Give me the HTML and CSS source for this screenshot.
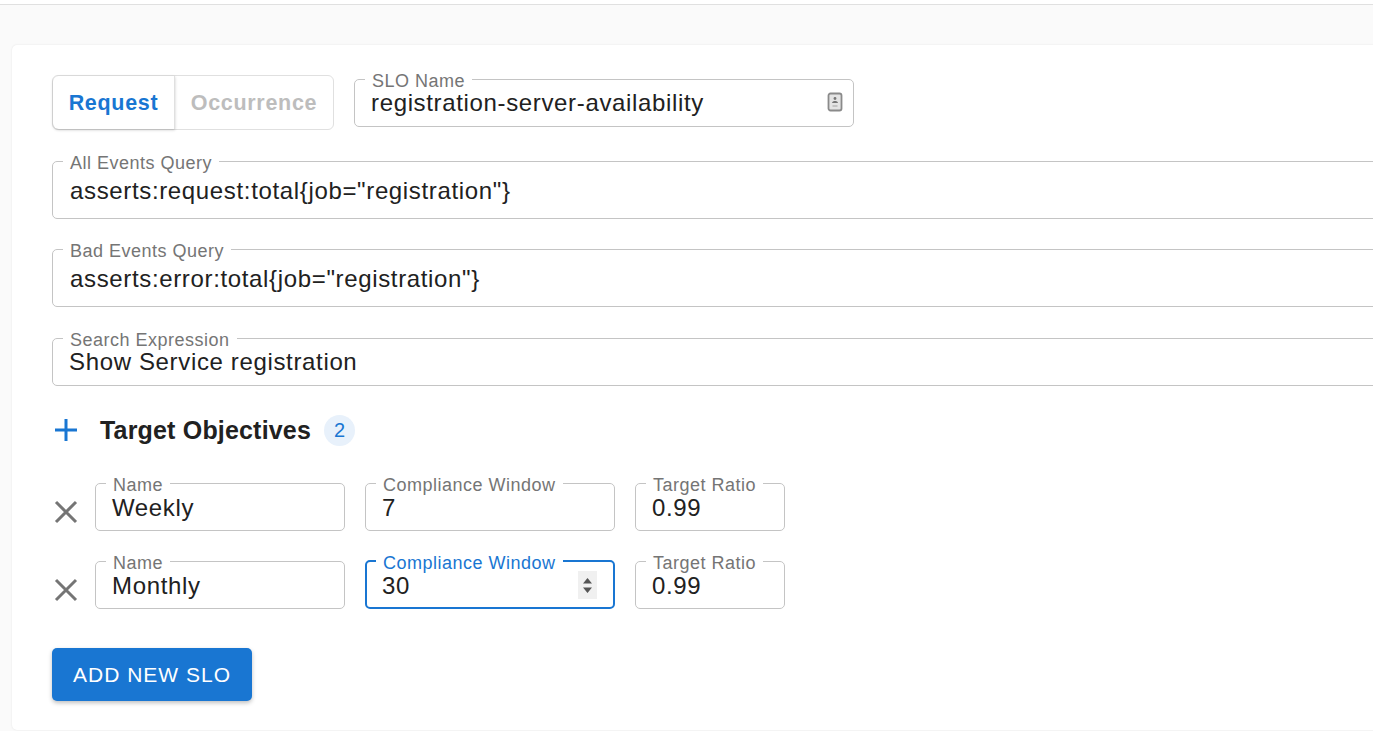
FILE: index.html
```html
<!DOCTYPE html>
<html>
<head>
    <title>Add SLO</title>
    <link rel="stylesheet" href="styles.css">
</head>
<body>
    <div id="topBar"></div>
    <div id="wrap">
        <div id="card">
            <div class="row">
                <div class="toggle">
                    <div class="toggleItem active">Request</div>
                    <div class="toggleItem">Occurrence</div>
                </div>
                <fieldset class="field sloName">
                    <legend>SLO Name</legend>
                    <div class="value">registration-server-availability</div>
                    <svg class="contactIcon" width="16" height="20" viewBox="0 0 16 20">
                        <rect x="1.5" y="1.5" width="13" height="17" rx="2" fill="#e4e4e4" stroke="#8a8a8a" stroke-width="1.8"/>
                        <circle cx="8" cy="6.5" r="1.4" fill="#777"/>
                        <path d="M5 11 C5.5 8.4 10.5 8.4 11 11 Z" fill="#777"/>
                        <path d="M5.5 14 H10.5" stroke="#b5b5b5" stroke-width="1.4"/>
                    </svg>
                </fieldset>
            </div>

            <fieldset class="field wide">
                <legend>All Events Query</legend>
                <div class="value tall">asserts:request:total{job="registration"}</div>
            </fieldset>

            <fieldset class="field wide">
                <legend>Bad Events Query</legend>
                <div class="value tall">asserts:error:total{job="registration"}</div>
            </fieldset>

            <fieldset class="field wide short">
                <legend>Search Expression</legend>
                <div class="value search">Show Service registration</div>
            </fieldset>

            <div class="targetHead">
                <svg class="plusIcon" width="24" height="24" viewBox="0 0 24 24">
                    <path d="M12 1 V23 M1 12 H23" stroke="#1976d2" stroke-width="3" fill="none"/>
                </svg>
                <h2>Target Objectives</h2>
                <span class="badge">2</span>
            </div>

            <div class="targetRow">
                <svg class="closeIcon" width="24" height="24" viewBox="0 0 24 24">
                    <path d="M2 2 L22 22 M22 2 L2 22" stroke="#757575" stroke-width="3" fill="none"/>
                </svg>
                <fieldset class="field nameField">
                    <legend>Name</legend>
                    <div class="value">Weekly</div>
                </fieldset>
                <fieldset class="field windowField">
                    <legend>Compliance Window</legend>
                    <div class="value">7</div>
                </fieldset>
                <fieldset class="field ratioField">
                    <legend>Target Ratio</legend>
                    <div class="value">0.99</div>
                </fieldset>
            </div>

            <div class="targetRow">
                <svg class="closeIcon" width="24" height="24" viewBox="0 0 24 24">
                    <path d="M2 2 L22 22 M22 2 L2 22" stroke="#757575" stroke-width="3" fill="none"/>
                </svg>
                <fieldset class="field nameField">
                    <legend>Name</legend>
                    <div class="value">Monthly</div>
                </fieldset>
                <fieldset class="field windowField focused">
                    <legend>Compliance Window</legend>
                    <div class="value">30</div>
                    <div class="spinner">
                        <svg width="19" height="28" viewBox="0 0 19 28">
                            <path d="M9.5 7 L14 12.5 H5 Z M9.5 22 L14 16.5 H5 Z" fill="#555"/>
                        </svg>
                    </div>
                </fieldset>
                <fieldset class="field ratioField">
                    <legend>Target Ratio</legend>
                    <div class="value">0.99</div>
                </fieldset>
            </div>

            <button class="addButton" type="button">ADD NEW SLO</button>
        </div>
    </div>
</body>
</html>
```

FILE: styles.css
```css
html, body {
    padding: 0;
    margin: 0;
    height: 100%;
    overflow: hidden;
    background: #fafafa;
    font-family: "Liberation Sans", Arial, Helvetica, sans-serif;
    color: #212121;
}
#topBar {
    height: 4px;
    background: #fff;
    border-bottom: 1px solid #e0e0e0;
}
#wrap {
    padding: 40px 0 0 12px;
}
#card {
    width: 1420px;
    height: 685px;
    box-sizing: border-box;
    padding: 22px 40px 0;
    background: #fff;
    border-radius: 5px;
    box-shadow: 0 0 2px rgba(0,0,0,0.1);
}
.row {
    display: flex;
    align-items: flex-start;
    gap: 20px;
    margin-bottom: 19px;
}
.toggle {
    display: flex;
    width: 282px;
    height: 55px;
    box-sizing: border-box;
    margin-top: 8px;
    border: 1px solid #e0e0e0;
    border-radius: 6px;
}
.toggleItem {
    display: flex;
    align-items: center;
    justify-content: center;
    flex: 1;
    padding-top: 2px;
    font-size: 21.5px;
    letter-spacing: 0.7px;
    font-weight: bold;
    color: #bdbdbd;
}
.toggleItem.active {
    flex: none;
    width: 122px;
    box-sizing: border-box;
    color: #1976d2;
    border-right: 1px solid #e0e0e0;
    border-radius: 6px 0 0 6px;
    box-shadow: 0 1px 3px rgba(0,0,0,0.22);
}
.field {
    position: relative;
    min-width: 0;
    margin: 0;
    padding: 0 17px;
    box-sizing: border-box;
    border: 1px solid #c4c4c4;
    border-radius: 5px;
}
.field legend {
    margin-left: -7px;
    padding: 4px 7px 0;
    font-size: 18px;
    letter-spacing: 0.5px;
    line-height: 20px;
    color: #757575;
}
.value {
    font-size: 24px;
    letter-spacing: 0.65px;
    line-height: 28px;
    height: 28px;
    margin-top: -2px;
    margin-bottom: 9px;
}
.value.tall {
    padding-top: 6px;
    margin-bottom: 13px;
}
.value.search {
    margin-left: -1px;
    margin-bottom: 9px;
}
.sloName {
    width: 500px;
}
.sloName .value {
    margin-left: -1px;
}
.contactIcon {
    position: absolute;
    right: 10px;
    top: 1px;
}
.wide {
    display: block;
    margin-bottom: 18px;
}
.short {
    margin-top: 19px;
}
.targetHead {
    display: flex;
    align-items: center;
    height: 52px;
    margin-bottom: 15px;
}
.plusIcon {
    margin: 0 22px 0 2px;
}
.targetHead h2 {
    margin: 0 13px 0 0;
    font-size: 25px;
    letter-spacing: 0.18px;
    font-weight: bold;
}
.badge {
    display: flex;
    align-items: center;
    justify-content: center;
    width: 31px;
    height: 31px;
    border-radius: 50%;
    background: #e8f1fb;
    color: #1976d2;
    font-size: 20px;
}
.targetRow {
    display: flex;
    align-items: flex-end;
    gap: 20px;
    margin-bottom: 18px;
}
.targetRow .value {
    margin-top: -1px;
    margin-left: -1px;
    margin-bottom: 8px;
}
.closeIcon {
    margin: 0 -3px 7px 2px;
}
.nameField {
    width: 250px;
}
.windowField {
    width: 250px;
}
.ratioField {
    width: 150px;
}
.focused {
    border: 2px solid #1976d2;
    padding: 0 16px;
}
.focused legend {
    color: #1976d2;
}
.targetRow .focused .value {
    margin-bottom: 7px;
}
.spinner {
    position: absolute;
    right: 16px;
    bottom: 8px;
    width: 19px;
    height: 28px;
    background: #f0f0f0;
}
.spinner svg {
    display: block;
}
.addButton {
    display: block;
    width: 200px;
    height: 53px;
    margin-top: 39px;
    border: 0;
    border-radius: 5px;
    background: #1976d2;
    color: #fff;
    font-family: inherit;
    font-size: 21px;
    letter-spacing: 1px;
    box-shadow: 0 2px 4px rgba(0,0,0,0.25);
}
```
